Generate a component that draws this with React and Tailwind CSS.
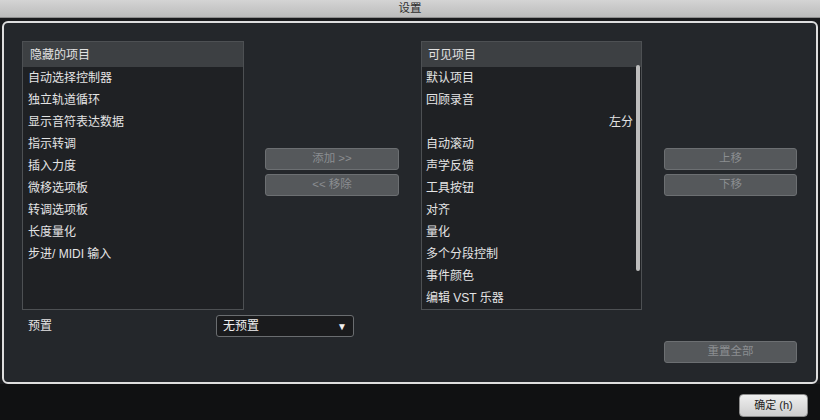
import React from "react";

const hidden = [
  "自动选择控制器",
  "独立轨道循环",
  "显示音符表达数据",
  "指示转调",
  "插入力度",
  "微移选项板",
  "转调选项板",
  "长度量化",
  "步进/ MIDI 输入",
];

const visible = [
  { t: "默认项目" },
  { t: "回顾录音" },
  { t: "左分", right: true },
  { t: "自动滚动" },
  { t: "声学反馈" },
  { t: "工具按钮" },
  { t: "对齐" },
  { t: "量化" },
  { t: "多个分段控制" },
  { t: "事件颜色" },
  { t: "编辑 VST 乐器" },
];

function DimButton({ children, className = "" }) {
  return (
    <div
      className={`h-[22px] flex items-center justify-center rounded-[3px] border border-[#6c6f72] bg-[#55585b] text-[11.5px] text-[#8b8e91] ${className}`}
    >
      {children}
    </div>
  );
}

export default function App() {
  return (
    <div className="w-[820px] h-[420px] overflow-hidden bg-[#101112] flex flex-col font-['Liberation_Sans','Noto_Sans_CJK_SC',sans-serif]">
      {/* window title */}
      <div className="h-[18px] shrink-0 flex items-center justify-center bg-gradient-to-b from-[#d4d4d4] to-[#bcbcbc] border-b border-[#8e8e8e] text-[11.5px] text-[#2e2e2e]">
        设置
      </div>

      <div className="bg-[#1a1b1d] pt-[3px] px-[2px]">
        {/* settings panel */}
        <div className="h-[363px] rounded-[6px] border-2 border-[#dedede] bg-[#24272b] pl-[18px] pt-[18px] text-[12px] text-[#e4e4e4]">
          <div className="flex items-start">
            {/* hidden items list */}
            <div className="w-[222px] h-[269px] border border-[#4d5053] bg-[#1f2124]">
              <div className="h-[25px] flex items-center pl-[7px] bg-[#3d4043] text-[#e2e2e2]">
                隐藏的项目
              </div>
              {hidden.map((t) => (
                <div key={t} className="h-[22px] flex items-center pl-[5px]">
                  {t}
                </div>
              ))}
            </div>

            <div className="w-[134px] ml-[21px] mt-[107px] flex flex-col gap-[4px]">
              <DimButton>添加 &gt;&gt;</DimButton>
              <DimButton>&lt;&lt; 移除</DimButton>
            </div>

            {/* visible items list */}
            <div className="relative w-[221px] h-[269px] ml-[22px] border border-[#4d5053] bg-[#1f2124]">
              <div className="h-[25px] flex items-center pl-[6px] bg-[#3d4043] text-[#e2e2e2]">
                可见项目
              </div>
              <div className="pr-[8px]">
                {visible.map((r) => (
                  <div
                    key={r.t}
                    className={`h-[22px] flex items-center pl-[4px] ${r.right ? "justify-end" : ""}`}
                  >
                    {r.t}
                  </div>
                ))}
              </div>
              <div className="absolute right-[1px] top-[23px] w-[4px] h-[206px] rounded-[2px] bg-[#bdbdbd]" />
            </div>

            <div className="w-[133px] ml-[22px] mt-[107px] flex flex-col gap-[4px]">
              <DimButton>上移</DimButton>
              <DimButton>下移</DimButton>
            </div>
          </div>

          <div className="flex items-start mt-[5px]">
            <div className="w-[194px] h-[22px] flex items-center pl-[6px]">预置</div>
            <div className="w-[138px] h-[22px] flex items-center justify-between px-[6px] rounded-[3px] border border-[#6a6d70] bg-[#1a1b1d] text-[#f0f0f0]">
              <span>无预置</span>
              <span className="text-[10px]">▼</span>
            </div>
            <DimButton className="w-[133px] ml-[310px] mt-[26px]">重置全部</DimButton>
          </div>
        </div>
      </div>

      <div className="flex-1 flex justify-end items-start pt-[10px] pr-[12px]">
        <div className="w-[69px] h-[23px] flex items-center justify-center rounded-[4px] border border-[#8d8d8d] bg-gradient-to-b from-[#efefef] to-[#cdcdcd] text-[11px] text-[#1e1e1e]">
          确定 (h)
        </div>
      </div>
    </div>
  );
}
